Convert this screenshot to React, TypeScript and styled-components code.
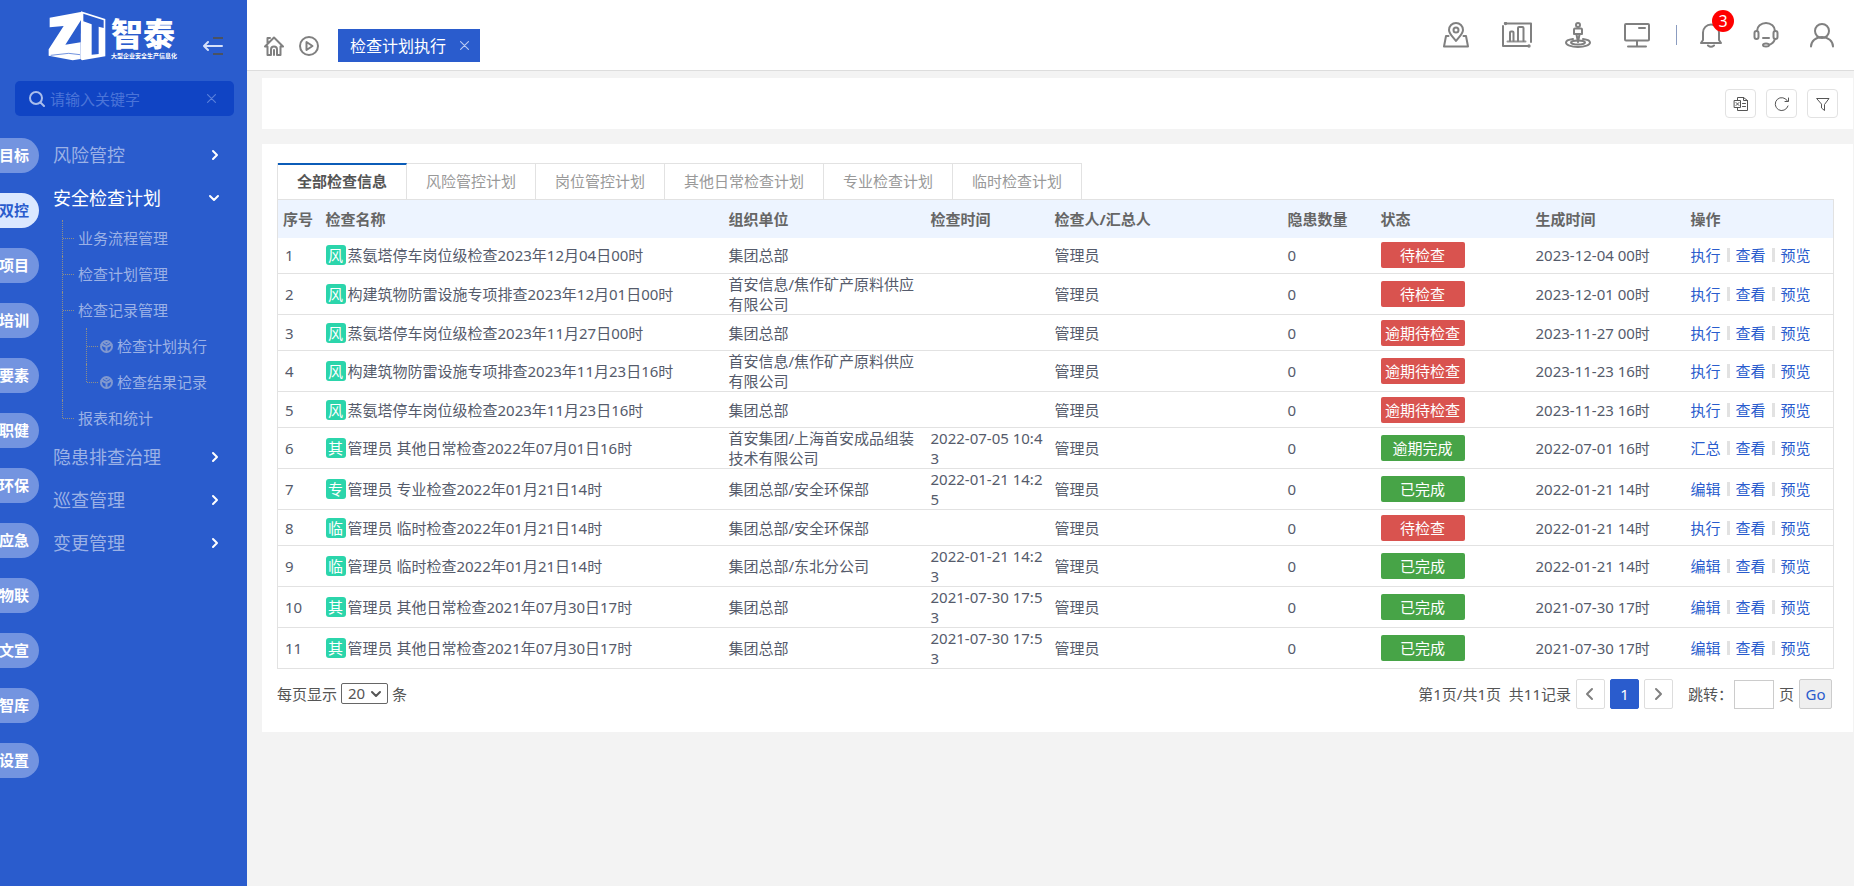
import React from 'react';
import styled, { createGlobalStyle, css } from 'styled-components';

const blue = '#2a5ccd';

const GlobalStyle = createGlobalStyle`
  *, *::before, *::after { box-sizing: border-box; }
  body {
    margin: 0;
    background: #f3f3f3;
    color: #555;
    font: 15px/20px "Noto Sans", "Noto Sans CJK SC", sans-serif;
  }
  button, input, select { font: inherit; color: inherit; margin: 0; padding: 0; }
  button { border: 0; background: none; cursor: pointer; }
  a { color: inherit; text-decoration: none; }
  ul { list-style: none; margin: 0; padding: 0; }
  svg { display: block; flex: none; }
`;

const Page = styled.div`
  display: grid;
  grid-template-columns: 247px minmax(0, 1fr);
  min-height: 100vh;
`;

/* ---------- sidebar ---------- */

const Sidebar = styled.aside`
  background: ${blue};
  color: #fff;
`;

const Brand = styled.div`
  display: flex;
  align-items: flex-start;
  height: 71px;
  padding: 10px 24px 0 48px;
`;

const BrandText = styled.div`
  margin: 6px 0 0 5px;
  width: 67px;
  white-space: nowrap;
`;

const BrandName = styled.div`
  font-size: 32px;
  line-height: 36px;
  font-weight: 900;
`;

const BrandSlogan = styled.div`
  font-size: 6px;
  line-height: 8px;
  font-weight: 700;
`;

const CollapseButton = styled.button`
  margin: 26px 0 0 auto;
`;

const SearchBox = styled.label`
  display: flex;
  align-items: center;
  height: 35px;
  margin: 10px 13px 0 15px;
  padding: 0 18px 0 14px;
  border-radius: 5px;
  background: #1044c4;
`;

const SearchInput = styled.input`
  flex: 1;
  min-width: 0;
  margin-left: 5px;
  border: 0;
  outline: 0;
  background: none;
  color: #fff;
  &::placeholder { color: #4b74d8; opacity: 1; }
`;

const SidebarBody = styled.div`
  display: flex;
  align-items: flex-start;
  padding-top: 18px;
`;

const ModuleList = styled.nav`
  display: flex;
  flex-direction: column;
  gap: 20px;
  width: 39px;
  padding: 4px 0 20px;
`;

const ModuleLink = styled.a<{ $active?: boolean }>`
  display: flex;
  align-items: center;
  justify-content: flex-end;
  height: 35px;
  padding: 0 10px 2px 0;
  border-radius: 0 18px 18px 0;
  overflow: hidden;
  white-space: nowrap;
  font-weight: 700;
  color: ${p => (p.$active ? blue : '#fff')};
  background: ${p => (p.$active ? '#dbe8ff' : '#7394e0')};
`;

const Menu = styled.nav`
  flex: 1;
`;

const MenuItem = styled.button<{ $open?: boolean }>`
  display: flex;
  align-items: center;
  justify-content: space-between;
  width: 100%;
  height: 43px;
  padding: 0 27px 2px 14px;
  font-size: 18px;
  color: ${p => (p.$open ? '#fff' : '#9bb1e6')};
`;

const Tree = styled.ul`
  margin-left: 23px;
  & & { margin-left: 8px; }
`;

const TreeNode = styled.li`
  position: relative;
  padding-left: 16px;
  &::before {
    content: '';
    position: absolute;
    left: 0;
    top: 0;
    bottom: 0;
    border-left: 1px dotted #8f8f86;
  }
  &:last-child::before { bottom: auto; height: 18px; }
  &::after {
    content: '';
    position: absolute;
    left: 1px;
    top: 18px;
    width: 11px;
    border-top: 1px dotted #8f8f86;
  }
`;

const TreeLink = styled.a<{ $leaf?: boolean }>`
  display: flex;
  align-items: center;
  gap: 4px;
  height: 36px;
  margin-left: ${p => (p.$leaf ? '-2px' : '0')};
  color: #9bb1e6;
`;

/* ---------- header ---------- */

const Main = styled.main`
  min-width: 0;
`;

const Header = styled.header`
  display: flex;
  align-items: flex-start;
  height: 71px;
  padding: 0 19px 0 17px;
  background: #fff;
  border-bottom: 1px solid #ddd;
`;

const Shortcuts = styled.div`
  display: flex;
  gap: 15px;
  margin-top: 36px;
`;

const PageTab = styled.div`
  display: flex;
  align-items: center;
  gap: 14px;
  height: 33px;
  margin: 29px 0 0 19px;
  padding: 0 11px 0 12px;
  background: ${blue};
  color: #fff;
  font-size: 16px;
`;

const HeaderTools = styled.div`
  display: flex;
  align-items: center;
  gap: 30px;
  height: 70px;
  margin-left: auto;
`;

const ToolGroup = styled.div`
  display: flex;
  align-items: center;
  gap: 33px;
`;

const ToolButton = styled.button`
  position: relative;
`;

const Divider = styled.span`
  width: 1px;
  height: 20px;
  margin: 0 -8px 0 -4px;
  background: #8b9cc0;
`;

const Count = styled.span`
  position: absolute;
  right: -11px;
  top: -12px;
  width: 22px;
  border-radius: 11px;
  background: #f00;
  color: #fff;
  font-size: 16px;
  line-height: 22px;
  text-align: center;
`;

/* ---------- content ---------- */

const Content = styled.div`
  display: flex;
  flex-direction: column;
  gap: 15px;
  padding: 7px 1px 20px 15px;
`;

const ActionBar = styled.section`
  display: flex;
  justify-content: flex-end;
  gap: 10px;
  padding: 11px 15px;
  background: #fff;
`;

const SquareButton = styled.button`
  display: grid;
  place-items: center;
  width: 31px;
  height: 29px;
  border: 1px solid #e2e2e2;
  border-radius: 4px;
`;

const Panel = styled.section`
  padding: 19px 19px 23px 15px;
  background: #fff;
`;

const Tabs = styled.div`
  display: flex;
  border-left: 1px solid #e2e2e2;
`;

const Tab = styled.button<{ $active?: boolean }>`
  height: 36px;
  padding: 0 19px 2px;
  border-top: 1px solid #e2e2e2;
  border-right: 1px solid #e2e2e2;
  color: #999;
  ${p => p.$active && css`
    border-top: 2px solid #0b5cb8;
    color: #555;
    font-weight: 700;
  `}
`;

const Table = styled.table`
  width: 100%;
  table-layout: fixed;
  border-collapse: collapse;
  border: 1px solid #e2e2e2;
  color: #555b6b;
`;

const Th = styled.th`
  height: 38px;
  padding: 0 5px;
  background: #edf4ff;
  color: #666;
  text-align: left;
  white-space: nowrap;
`;

const Row = styled.tr`
  height: 36px;
  & + & { border-top: 1px solid #e2e2e2; }
`;

const Td = styled.td`
  padding: 0 5px;
  word-break: break-all;
`;

const IndexTd = styled(Td)`
  padding-left: 7px;
`;

const NameCell = styled.div`
  display: flex;
  align-items: center;
  gap: 2px;
`;

const Kind = styled.span`
  flex: none;
  width: 20px;
  height: 20px;
  border-radius: 3px;
  background: #2bd5ab;
  color: #fff;
  text-align: center;
`;

const Status = styled.span<{ $done: boolean }>`
  display: block;
  width: 84px;
  border-radius: 2px;
  background: ${p => (p.$done ? '#47a447' : '#d9534f')};
  color: #fff;
  line-height: 26px;
  text-align: center;
`;

const Ops = styled.div`
  display: flex;
  align-items: center;
  gap: 6px;
  color: ${blue};
`;

const OpLink = styled.a`
  & + & {
    display: flex;
    align-items: center;
    gap: 6px;
  }
  & + &::before {
    content: '';
    width: 3px;
    height: 14px;
    background: #e2e2e2;
  }
`;

const Footer = styled.div`
  display: flex;
  align-items: flex-start;
  justify-content: space-between;
  padding: 10px 2px 0 0;
`;

const PageSize = styled.label`
  display: flex;
  align-items: center;
  gap: 4px;
  margin-top: 4px;
`;

const SelectWrap = styled.span`
  display: grid;
  align-items: center;
  & > * { grid-area: 1 / 1; }
  & > svg { justify-self: end; margin-right: 6px; pointer-events: none; }
`;

const SizeSelect = styled.select`
  appearance: none;
  width: 47px;
  height: 21px;
  padding-left: 6px;
  border: 1px solid #666;
  border-radius: 2px;
  background: #fff;
  line-height: 19px;
`;

const Pager = styled.div`
  display: flex;
  align-items: center;
  gap: 5px;
`;

const Summary = styled.span`
  white-space: pre;
`;

const PageButton = styled.button<{ $current?: boolean }>`
  display: grid;
  place-items: center;
  width: 29px;
  height: 30px;
  border: 1px solid ${p => (p.$current ? blue : '#ddd')};
  border-radius: 2px;
  background: ${p => (p.$current ? blue : '#fff')};
  color: ${p => (p.$current ? '#fff' : '#888')};
`;

const JumpLabel = styled.label`
  display: flex;
  align-items: center;
  padding-left: 10px;
`;

const JumpInput = styled.input`
  width: 40px;
  height: 29px;
  margin: 0 5px 0 1px;
  border: 1px solid #ccc;
  background: #fff;
`;

const GoButton = styled.button`
  width: 33px;
  height: 30px;
  border: 1px solid #ccc;
  border-radius: 2px;
  background: #efefef;
  color: ${blue};
`;

/* ---------- icons ---------- */

type IconProps = { w: number; h: number; box?: string; stroke?: number; color?: string; children: React.ReactNode };

const Icon = ({ w, h, box, stroke = 2, color = '#808080', children }: IconProps) => (
  <svg width={w} height={h} viewBox={box ?? `0 0 ${w} ${h}`} fill="none" stroke={color}
    strokeWidth={stroke} strokeLinecap="round" strokeLinejoin="round" aria-hidden="true">
    {children}
  </svg>
);

const Logo = () => (
  <svg width="58" height="51" viewBox="0 0 174 153" aria-hidden="true">
    <path fill="#fff" d="M5 23 L98 6 L103 11 L103 24 L52 104 L98 97 L98 147 L74 151 L2 137 L2 118 L47 48 L5 52 Z" />
    <path fill="#fff" d="M99 4 L172 27 L172 139 L102 151 L98 148 Z" />
    <path fill={blue} d="M106 11 L167 31 L167 54 L152 50 L152 132 L131 134 L131 43 L106 34 Z" />
    <path fill="none" stroke={blue} strokeWidth="2" d="M8 136 L62 130 L96 134" />
  </svg>
);

const Chevron = ({ down }: { down?: boolean }) => (
  <Icon w={12} h={12} color="#fff">
    {down ? <path d="M2 4l4 4 4-4" /> : <path d="M5 2l4 4-4 4" />}
  </Icon>
);

const Cube = () => (
  <Icon w={13} h={13} stroke={2} color="#8098cf">
    <circle cx="6.5" cy="6.5" r="5.5" />
    <path d="M1.5 4.5l5 2.5 5-2.5M6.5 7v5M4 2.5l2.5 1.5L9 2.5" />
  </Icon>
);

const Cross = ({ size, color }: { size: number; color: string }) => (
  <Icon w={size} h={size} box="0 0 8 8" stroke={1} color={color}><path d="M.5.5l7 7M7.5.5l-7 7" /></Icon>
);

/* ---------- data ---------- */

const modules = ['目标', '双控', '项目', '培训', '要素', '职健', '环保', '应急', '物联', '文宣', '智库', '设置'];
const tabs = ['全部检查信息', '风险管控计划', '岗位管控计划', '其他日常检查计划', '专业检查计划', '临时检查计划'];
const columns: [string, string][] = [
  ['序号', '43px'], ['检查名称', 'auto'], ['组织单位', '202px'], ['检查时间', '124px'], ['检查人/汇总人', '233px'],
  ['隐患数量', '93px'], ['状态', '155px'], ['生成时间', '155px'], ['操作', '148px'],
];

type Plan = { kind: string; name: string; org: string; time?: string; status: string; created: string; op: string };

const plans: Plan[] = [
  { kind: '风', name: '蒸氨塔停车岗位级检查2023年12月04日00时', org: '集团总部', status: '待检查', created: '2023-12-04 00时', op: '执行' },
  { kind: '风', name: '构建筑物防雷设施专项排查2023年12月01日00时', org: '首安信息/焦作矿产原料供应有限公司', status: '待检查', created: '2023-12-01 00时', op: '执行' },
  { kind: '风', name: '蒸氨塔停车岗位级检查2023年11月27日00时', org: '集团总部', status: '逾期待检查', created: '2023-11-27 00时', op: '执行' },
  { kind: '风', name: '构建筑物防雷设施专项排查2023年11月23日16时', org: '首安信息/焦作矿产原料供应有限公司', status: '逾期待检查', created: '2023-11-23 16时', op: '执行' },
  { kind: '风', name: '蒸氨塔停车岗位级检查2023年11月23日16时', org: '集团总部', status: '逾期待检查', created: '2023-11-23 16时', op: '执行' },
  { kind: '其', name: '管理员 其他日常检查2022年07月01日16时', org: '首安集团/上海首安成品组装技术有限公司', time: '2022-07-05 10:43', status: '逾期完成', created: '2022-07-01 16时', op: '汇总' },
  { kind: '专', name: '管理员 专业检查2022年01月21日14时', org: '集团总部/安全环保部', time: '2022-01-21 14:25', status: '已完成', created: '2022-01-21 14时', op: '编辑' },
  { kind: '临', name: '管理员 临时检查2022年01月21日14时', org: '集团总部/安全环保部', status: '待检查', created: '2022-01-21 14时', op: '执行' },
  { kind: '临', name: '管理员 临时检查2022年01月21日14时', org: '集团总部/东北分公司', time: '2022-01-21 14:23', status: '已完成', created: '2022-01-21 14时', op: '编辑' },
  { kind: '其', name: '管理员 其他日常检查2021年07月30日17时', org: '集团总部', time: '2021-07-30 17:53', status: '已完成', created: '2021-07-30 17时', op: '编辑' },
  { kind: '其', name: '管理员 其他日常检查2021年07月30日17时', org: '集团总部', time: '2021-07-30 17:53', status: '已完成', created: '2021-07-30 17时', op: '编辑' },
];

/* ---------- page ---------- */

const SideNavigation = () => (
  <Sidebar>
    <Brand>
      <Logo />
      <BrandText>
        <BrandName>智泰</BrandName>
        <BrandSlogan>大型企业安全生产信息化</BrandSlogan>
      </BrandText>
      <CollapseButton aria-label="收起菜单">
        <Icon w={20} h={20}>
          <path stroke="#4a5262" strokeLinecap="butt" d="M10 2h10M10 18h10" />
          <path stroke="#d5e0fa" d="M19 10H1M5 6l-4 4 4 4" />
        </Icon>
      </CollapseButton>
    </Brand>
    <SearchBox>
      <Icon w={16} h={16} color="#a9bdec"><circle cx="7" cy="7" r="6" /><path d="M11.5 11.5L15 15" /></Icon>
      <SearchInput placeholder="请输入关键字" aria-label="搜索菜单" />
      <button aria-label="清空"><Cross size={9} color="#5a80dc" /></button>
    </SearchBox>
    <SidebarBody>
      <ModuleList>
        {modules.map(m => <ModuleLink key={m} href="#" $active={m === '双控'}>{m}</ModuleLink>)}
      </ModuleList>
      <Menu>
        <MenuItem>风险管控<Chevron /></MenuItem>
        <MenuItem $open>安全检查计划<Chevron down /></MenuItem>
        <Tree>
          <TreeNode><TreeLink href="#">业务流程管理</TreeLink></TreeNode>
          <TreeNode><TreeLink href="#">检查计划管理</TreeLink></TreeNode>
          <TreeNode>
            <TreeLink href="#">检查记录管理</TreeLink>
            <Tree>
              <TreeNode><TreeLink href="#" $leaf><Cube />检查计划执行</TreeLink></TreeNode>
              <TreeNode><TreeLink href="#" $leaf><Cube />检查结果记录</TreeLink></TreeNode>
            </Tree>
          </TreeNode>
          <TreeNode><TreeLink href="#">报表和统计</TreeLink></TreeNode>
        </Tree>
        <MenuItem>隐患排查治理<Chevron /></MenuItem>
        <MenuItem>巡查管理<Chevron /></MenuItem>
        <MenuItem>变更管理<Chevron /></MenuItem>
      </Menu>
    </SidebarBody>
  </Sidebar>
);

const TopBar = () => (
  <Header>
    <Shortcuts>
      <button aria-label="首页">
        <Icon w={20} h={20}>
          <path d="M1 10.5L10 1.5l9 9h-2.500V19H13v-5.500a3 3 0 0 0-6 0V19H3.500v-8.500zM3.500 7V2H6M10 14v5" />
        </Icon>
      </button>
      <button aria-label="演示">
        <Icon w={20} h={20}><circle cx="10" cy="10" r="9" /><path d="M7.500 6v8l6-4z" /></Icon>
      </button>
    </Shortcuts>
    <PageTab>
      检查计划执行
      <button aria-label="关闭"><Cross size={9} color="#b9caf2" /></button>
    </PageTab>
    <HeaderTools>
      <ToolGroup>
        <ToolButton aria-label="地图">
          <Icon w={26} h={26}>
            <path d="M13 19C9 14 6 11.500 6 8a7 7 0 0 1 14 0c0 3.500-3 6-7 11z" />
            <circle cx="13" cy="8" r="2.500" />
            <path d="M5.500 14H3L1 24.500h24L23 14h-2.500" />
          </Icon>
        </ToolButton>
        <ToolButton aria-label="统计">
          <Icon w={30} h={26}>
            <path d="M3.500 1.500H29V20M1 4v20h25" />
            <path stroke="#999" d="M5.500 19.500h18" />
            <path d="M8 19v-8.500q0-1 1-1h1.500q1 0 1 1V19M16 19V6q0-1 1-1h3.500q1 0 1 1v13" />
            <circle cx="3.500" cy="1.500" r=".7" /><circle cx="27" cy="24" r=".7" />
          </Icon>
        </ToolButton>
        <ToolButton aria-label="人员定位">
          <Icon w={26} h={26}>
            <circle cx="13" cy="3" r="2" />
            <path d="M9 7.500q0-1 1-1h6q1 0 1 1V12H9zM11.500 12.500L13 20l1.500-7.500" />
            <path d="M8 17c-4 .5-7 1.500-7 3.500C1 23 6 25 13 25s12-2 12-4.500c0-2-3-3-7-3.500" />
            <ellipse cx="13" cy="20.500" rx="7" ry="2" />
          </Icon>
        </ToolButton>
        <ToolButton aria-label="大屏">
          <Icon w={26} h={26}>
            <rect x="1" y="2" width="24" height="16.500" rx="1" />
            <path d="M13 19v5M4 24.500h18M15 6h6" />
          </Icon>
        </ToolButton>
      </ToolGroup>
      <Divider />
      <ToolButton aria-label="消息">
        <Icon w={24} h={26}>
          <path d="M12 2.500a8 8 0 0 0-8 8V18l-2 3h20l-2-3v-7.500a8 8 0 0 0-8-8zM9 23.500q3 2.500 6 0" />
        </Icon>
        <Count>3</Count>
      </ToolButton>
      <ToolButton aria-label="客服">
        <Icon w={26} h={26}>
          <path d="M4 9a9 8 0 0 1 18 0M22 17c-1 3-3 5-6 6" />
          <rect x="1.500" y="9" width="4" height="8" rx="2" />
          <rect x="20.500" y="9" width="4" height="8" rx="2" />
          <path d="M10 16h6" /><ellipse cx="13" cy="23" rx="3" ry="1.500" />
        </Icon>
      </ToolButton>
      <ToolButton aria-label="个人中心">
        <Icon w={26} h={26}><circle cx="13" cy="9" r="7" /><path d="M2 24.500a11 9.500 0 0 1 22 0" /></Icon>
      </ToolButton>
    </HeaderTools>
  </Header>
);

const PlanTable = () => (
  <Table>
    <colgroup>{columns.map(([name, width]) => <col key={name} style={{ width }} />)}</colgroup>
    <thead>
      <tr>{columns.map(([name]) => <Th key={name} scope="col">{name}</Th>)}</tr>
    </thead>
    <tbody>
      {plans.map((p, i) => (
        <Row key={i}>
          <IndexTd>{i + 1}</IndexTd>
          <Td><NameCell><Kind>{p.kind}</Kind>{p.name}</NameCell></Td>
          <Td>{p.org}</Td>
          <Td>{p.time}</Td>
          <Td>管理员</Td>
          <Td>0</Td>
          <Td><Status $done={p.status.endsWith('完成')}>{p.status}</Status></Td>
          <Td>{p.created}</Td>
          <Td>
            <Ops>
              <OpLink href="#">{p.op}</OpLink>
              <OpLink href="#">查看</OpLink>
              <OpLink href="#">预览</OpLink>
            </Ops>
          </Td>
        </Row>
      ))}
    </tbody>
  </Table>
);

export default function App() {
  return (
    <Page>
      <GlobalStyle />
      <SideNavigation />
      <Main>
        <TopBar />
        <Content>
          <ActionBar>
            <SquareButton aria-label="导出">
              <Icon w={16} h={16} stroke={1} color="#555">
                <path d="M4.500 4V1.500h6l4 3v10h-10V12M10.500 1.500v3h4M1.500 4.500h6v7h-6zM3 6.500l3 3M6 6.500l-3 3M9.500 7.500h3M9.500 10.500h3" />
              </Icon>
            </SquareButton>
            <SquareButton aria-label="刷新">
              <Icon w={16} h={16} stroke={1} color="#555">
                <path d="M14 10a6.500 6.500 0 1 1-.5-5M14.500 2v3.500H11" />
              </Icon>
            </SquareButton>
            <SquareButton aria-label="筛选">
              <Icon w={16} h={16} stroke={1} color="#555">
                <path d="M2 2.500h12L9.500 8.500v6L6.500 12V8.500z" />
              </Icon>
            </SquareButton>
          </ActionBar>
          <Panel>
            <Tabs role="tablist">
              {tabs.map((t, i) => <Tab key={t} role="tab" aria-selected={i === 0} $active={i === 0}>{t}</Tab>)}
            </Tabs>
            <PlanTable />
            <Footer>
              <PageSize>
                每页显示
                <SelectWrap>
                  <SizeSelect defaultValue="20"><option>20</option><option>50</option></SizeSelect>
                  <Icon w={12} h={8} color="#555"><path d="M2 2l4 4 4-4" /></Icon>
                </SelectWrap>
                条
              </PageSize>
              <Pager>
                <Summary>第1页/共1页  共11记录</Summary>
                <PageButton aria-label="上一页"><Icon w={12} h={14}><path d="M8 2L3 7l5 5" /></Icon></PageButton>
                <PageButton $current>1</PageButton>
                <PageButton aria-label="下一页"><Icon w={12} h={14}><path d="M4 2l5 5-5 5" /></Icon></PageButton>
                <JumpLabel>跳转：<JumpInput />页</JumpLabel>
                <GoButton>Go</GoButton>
              </Pager>
            </Footer>
          </Panel>
        </Content>
      </Main>
    </Page>
  );
}
